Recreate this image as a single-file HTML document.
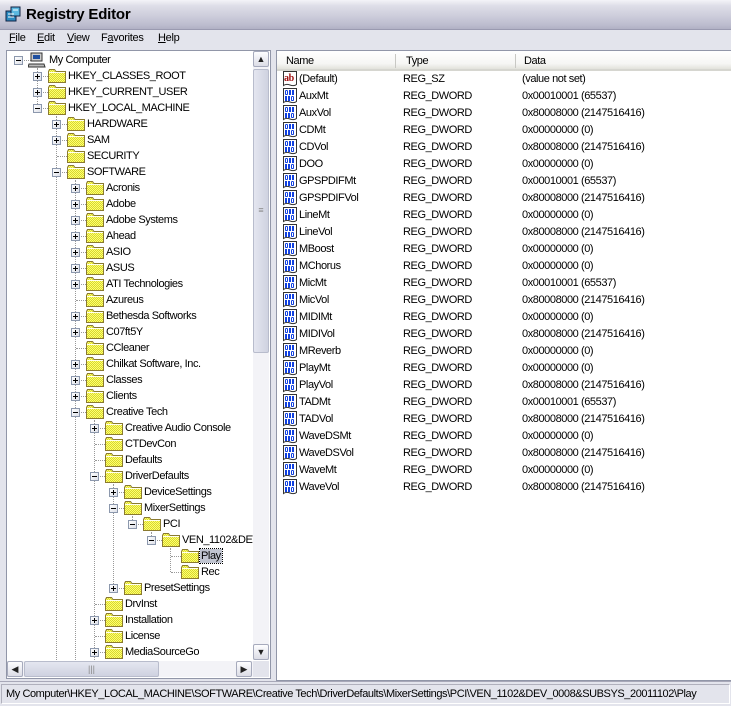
<!DOCTYPE html>
<html><head><meta charset="utf-8"><style>
*{margin:0;padding:0;box-sizing:border-box}
body{width:731px;height:706px;overflow:hidden;background:#e3e4ec;font-family:"Liberation Sans",Tahoma,sans-serif;font-size:11px;letter-spacing:-0.42px;color:#000;position:relative}
.abs{position:absolute}
#title{left:0;top:0;width:731px;height:30px;background:linear-gradient(#f4f4f8 0%,#dedee8 20%,#cdcddb 55%,#bdbdcf 85%,#b0b0c4 100%);border-bottom:1px solid #9a9ab0}
#title span{position:absolute;left:26px;top:6px;font-size:15px;font-weight:bold;color:#000;letter-spacing:-0.2px}
#menu{left:0;top:30px;width:731px;height:18px;background:#e3e4ec}
#menu span{position:absolute;top:2px;font-size:11px;letter-spacing:-0.3px}
#tree{left:6px;top:50px;width:265px;height:629px;background:#fff;border:1px solid #9196a8;overflow:hidden}
.r{position:absolute;height:16px;white-space:nowrap}
.b{position:absolute;left:0;top:4px;width:9px;height:9px;border:1px solid #8c98ad;background:linear-gradient(135deg,#fff,#dde0e8);z-index:2}
.b:before{content:"";position:absolute;left:1px;top:3px;width:5px;height:1px;background:#000}
.b.p:after{content:"";position:absolute;left:3px;top:1px;width:1px;height:5px;background:#000}
.h{position:absolute;left:5px;top:8px;width:12px;border-top:1px dotted #999}
.f{position:absolute;left:15px;top:1px}
.t{position:absolute;left:34px;top:1px;line-height:14px;padding:0 1px;background:#fff}
.sel{background:#c0c4d0;outline:1px dotted #000}
.v{position:absolute;border-left:1px dotted #999;width:0}
#vs{left:253px;top:51px;width:16px;height:609px;background:#f3f3f7}
.btn{position:absolute;width:16px;height:16px;border:1px solid #a6aabc;border-radius:2px;background:linear-gradient(#fdfdff,#dcdde6);font-size:9px;text-align:center;line-height:14px;color:#222;letter-spacing:0}
#hs{left:7px;top:661px;width:246px;height:16px;background:#f3f3f7}
#list{left:276px;top:50px;width:455px;height:631px;background:#fff;border:1px solid #9196a8;border-right:none}
#hdr{position:absolute;left:0;top:0;width:455px;height:20px;background:linear-gradient(#fff,#f6f6f4 70%,#e2e2dc);border-bottom:2px solid #d6d6d0}
#hdr span{position:absolute;top:4px}
.sepc{position:absolute;top:3px;width:1px;height:14px;background:#c8c8c4}
.lr{position:absolute;left:4px;height:17px;width:440px;white-space:nowrap}
.lr svg{position:absolute;left:1px;top:0}
.lr .n{position:absolute;left:18px;top:2px}
.lr .y{position:absolute;left:122px;top:2px}
.lr .d{position:absolute;left:241px;top:2px}
#status{left:0;top:681px;width:731px;height:25px;border-top:1px solid #a8a8b8;background:#e3e4ec}
#status div{position:absolute;left:1px;top:2px;width:729px;height:20px;border:1px solid #b0b0bc;border-bottom-color:#fff;border-right-color:#fff;padding:3px 0 0 4px;white-space:nowrap;overflow:hidden}
</style></head><body>
<svg width="0" height="0" style="position:absolute">
<defs>
<pattern id="ck" width="2" height="2" patternUnits="userSpaceOnUse"><rect width="2" height="2" fill="#ffff70"/><rect width="1" height="1" fill="#d8d830"/><rect x="1" y="1" width="1" height="1" fill="#d8d830"/></pattern>
<symbol id="fold" viewBox="0 0 18 14"><path d="M0.5 2.5 L0.5 13.5 L17.5 13.5 L17.5 2.5 L8 2.5 L6.5 0.5 L1.5 0.5 Z" fill="url(#ck)" stroke="#8a7a30"/><rect x="1" y="3" width="16" height="1" fill="#fffff0"/></symbol>
<symbol id="bin" viewBox="0 0 16 16"><path d="M1.5 0.5 H14.5 V13.5 Q12 15.5 8 14 Q4 12.5 1.5 14.5 Z" fill="#fff" stroke="#333"/><g fill="#1040e0"><rect x="3" y="2" width="3" height="5" rx="1.3"/><rect x="7" y="2" width="2" height="5"/><rect x="10" y="2" width="2" height="5"/><rect x="3" y="8" width="2" height="5"/><rect x="6" y="8" width="2" height="5"/><rect x="9" y="8" width="3" height="5" rx="1.3"/></g><g fill="#fff"><rect x="4" y="3" width="1" height="3"/><rect x="10" y="9" width="1" height="3"/></g></symbol>
<symbol id="ab" viewBox="0 0 16 16"><path d="M1.5 0.5 H14.5 V13.5 Q12 15.5 8 14 Q4 12.5 1.5 14.5 Z" fill="#fff" stroke="#333"/><text x="2" y="10" font-family="Liberation Serif,serif" font-weight="bold" font-size="10" fill="#a01010">ab</text></symbol>
</defs></svg>

<div id="title" class="abs">
<svg class="abs" style="left:5px;top:6px" width="17" height="17" viewBox="0 0 17 17"><rect x="1" y="5" width="10" height="10" fill="#2a8ac0" stroke="#124"/><rect x="6" y="1" width="9" height="9" fill="#5ab8e0" stroke="#124"/><path d="M3 8h6M3 11h6M8 4h5" stroke="#fff"/></svg>
<span>Registry Editor</span></div>
<div id="menu" class="abs">
<span style="left:9px"><u>F</u>ile</span><span style="left:37px"><u>E</u>dit</span><span style="left:67px"><u>V</u>iew</span><span style="left:101px">F<u>a</u>vorites</span><span style="left:158px"><u>H</u>elp</span>
</div>

<div id="tree" class="abs">
<div style="position:absolute;left:-6px;top:-50px;width:300px;height:720px">
<div class="v" style="left:36px;top:67px;height:40px"></div>
<div class="v" style="left:55px;top:115px;height:560px"></div>
<div class="v" style="left:74px;top:179px;height:500px"></div>
<div class="v" style="left:93px;top:419px;height:260px"></div>
<div class="v" style="left:112px;top:483px;height:104px"></div>
<div class="v" style="left:131px;top:515px;height:8px"></div>
<div class="v" style="left:150px;top:531px;height:8px"></div>
<div class="v" style="left:169px;top:547px;height:24px"></div>

<div class="r" style="top:51px;left:13px"><div class="b"></div><div class="h"></div><svg class="f" style="left:14px;top:0" width="18" height="16" viewBox="0 0 18 16"><rect x="3" y="1" width="11" height="8" fill="#ccc" stroke="#333"/><rect x="5" y="3" width="7" height="4" fill="#2050a0"/><path d="M1 12h15l1 3H0z" fill="#bbb" stroke="#333"/></svg><span class="t">My Computer</span></div>
<div class="r" style="top:67px;left:32px"><div class="b p"></div><div class="h"></div><svg class="f" width="18" height="14"><use href="#fold"/></svg><span class="t">HKEY_CLASSES_ROOT</span></div>
<div class="r" style="top:83px;left:32px"><div class="b p"></div><div class="h"></div><svg class="f" width="18" height="14"><use href="#fold"/></svg><span class="t">HKEY_CURRENT_USER</span></div>
<div class="r" style="top:99px;left:32px"><div class="b"></div><div class="h"></div><svg class="f" width="18" height="14"><use href="#fold"/></svg><span class="t">HKEY_LOCAL_MACHINE</span></div>
<div class="r" style="top:115px;left:51px"><div class="b p"></div><div class="h"></div><svg class="f" width="18" height="14"><use href="#fold"/></svg><span class="t">HARDWARE</span></div>
<div class="r" style="top:131px;left:51px"><div class="b p"></div><div class="h"></div><svg class="f" width="18" height="14"><use href="#fold"/></svg><span class="t">SAM</span></div>
<div class="r" style="top:147px;left:51px"><div class="h"></div><svg class="f" width="18" height="14"><use href="#fold"/></svg><span class="t">SECURITY</span></div>
<div class="r" style="top:163px;left:51px"><div class="b"></div><div class="h"></div><svg class="f" width="18" height="14"><use href="#fold"/></svg><span class="t">SOFTWARE</span></div>
<div class="r" style="top:179px;left:70px"><div class="b p"></div><div class="h"></div><svg class="f" width="18" height="14"><use href="#fold"/></svg><span class="t">Acronis</span></div>
<div class="r" style="top:195px;left:70px"><div class="b p"></div><div class="h"></div><svg class="f" width="18" height="14"><use href="#fold"/></svg><span class="t">Adobe</span></div>
<div class="r" style="top:211px;left:70px"><div class="b p"></div><div class="h"></div><svg class="f" width="18" height="14"><use href="#fold"/></svg><span class="t">Adobe Systems</span></div>
<div class="r" style="top:227px;left:70px"><div class="b p"></div><div class="h"></div><svg class="f" width="18" height="14"><use href="#fold"/></svg><span class="t">Ahead</span></div>
<div class="r" style="top:243px;left:70px"><div class="b p"></div><div class="h"></div><svg class="f" width="18" height="14"><use href="#fold"/></svg><span class="t">ASIO</span></div>
<div class="r" style="top:259px;left:70px"><div class="b p"></div><div class="h"></div><svg class="f" width="18" height="14"><use href="#fold"/></svg><span class="t">ASUS</span></div>
<div class="r" style="top:275px;left:70px"><div class="b p"></div><div class="h"></div><svg class="f" width="18" height="14"><use href="#fold"/></svg><span class="t">ATI Technologies</span></div>
<div class="r" style="top:291px;left:70px"><div class="h"></div><svg class="f" width="18" height="14"><use href="#fold"/></svg><span class="t">Azureus</span></div>
<div class="r" style="top:307px;left:70px"><div class="b p"></div><div class="h"></div><svg class="f" width="18" height="14"><use href="#fold"/></svg><span class="t">Bethesda Softworks</span></div>
<div class="r" style="top:323px;left:70px"><div class="b p"></div><div class="h"></div><svg class="f" width="18" height="14"><use href="#fold"/></svg><span class="t">C07ft5Y</span></div>
<div class="r" style="top:339px;left:70px"><div class="h"></div><svg class="f" width="18" height="14"><use href="#fold"/></svg><span class="t">CCleaner</span></div>
<div class="r" style="top:355px;left:70px"><div class="b p"></div><div class="h"></div><svg class="f" width="18" height="14"><use href="#fold"/></svg><span class="t">Chilkat Software, Inc.</span></div>
<div class="r" style="top:371px;left:70px"><div class="b p"></div><div class="h"></div><svg class="f" width="18" height="14"><use href="#fold"/></svg><span class="t">Classes</span></div>
<div class="r" style="top:387px;left:70px"><div class="b p"></div><div class="h"></div><svg class="f" width="18" height="14"><use href="#fold"/></svg><span class="t">Clients</span></div>
<div class="r" style="top:403px;left:70px"><div class="b"></div><div class="h"></div><svg class="f" width="18" height="14"><use href="#fold"/></svg><span class="t">Creative Tech</span></div>
<div class="r" style="top:419px;left:89px"><div class="b p"></div><div class="h"></div><svg class="f" width="18" height="14"><use href="#fold"/></svg><span class="t">Creative Audio Console</span></div>
<div class="r" style="top:435px;left:89px"><div class="h"></div><svg class="f" width="18" height="14"><use href="#fold"/></svg><span class="t">CTDevCon</span></div>
<div class="r" style="top:451px;left:89px"><div class="h"></div><svg class="f" width="18" height="14"><use href="#fold"/></svg><span class="t">Defaults</span></div>
<div class="r" style="top:467px;left:89px"><div class="b"></div><div class="h"></div><svg class="f" width="18" height="14"><use href="#fold"/></svg><span class="t">DriverDefaults</span></div>
<div class="r" style="top:483px;left:108px"><div class="b p"></div><div class="h"></div><svg class="f" width="18" height="14"><use href="#fold"/></svg><span class="t">DeviceSettings</span></div>
<div class="r" style="top:499px;left:108px"><div class="b"></div><div class="h"></div><svg class="f" width="18" height="14"><use href="#fold"/></svg><span class="t">MixerSettings</span></div>
<div class="r" style="top:515px;left:127px"><div class="b"></div><div class="h"></div><svg class="f" width="18" height="14"><use href="#fold"/></svg><span class="t">PCI</span></div>
<div class="r" style="top:531px;left:146px"><div class="b"></div><div class="h"></div><svg class="f" width="18" height="14"><use href="#fold"/></svg><span class="t">VEN_1102&amp;DEV_0008</span></div>
<div class="r" style="top:547px;left:165px"><div class="h"></div><svg class="f" width="18" height="14"><use href="#fold"/></svg><span class="t sel">Play</span></div>
<div class="r" style="top:563px;left:165px"><div class="h"></div><svg class="f" width="18" height="14"><use href="#fold"/></svg><span class="t">Rec</span></div>
<div class="r" style="top:579px;left:108px"><div class="b p"></div><div class="h"></div><svg class="f" width="18" height="14"><use href="#fold"/></svg><span class="t">PresetSettings</span></div>
<div class="r" style="top:595px;left:89px"><div class="h"></div><svg class="f" width="18" height="14"><use href="#fold"/></svg><span class="t">DrvInst</span></div>
<div class="r" style="top:611px;left:89px"><div class="b p"></div><div class="h"></div><svg class="f" width="18" height="14"><use href="#fold"/></svg><span class="t">Installation</span></div>
<div class="r" style="top:627px;left:89px"><div class="h"></div><svg class="f" width="18" height="14"><use href="#fold"/></svg><span class="t">License</span></div>
<div class="r" style="top:643px;left:89px"><div class="b p"></div><div class="h"></div><svg class="f" width="18" height="14"><use href="#fold"/></svg><span class="t">MediaSourceGo</span></div>
</div>
</div>
<div class="abs" style="left:269px;top:51px;width:1px;height:627px;background:#fff"></div>

<div id="vs" class="abs">
<div class="btn" style="left:0;top:0">&#9650;</div>
<div class="btn" style="left:0;top:18px;height:284px;background:linear-gradient(90deg,#e4e6f0,#cfd2e0);border-color:#b8bccc;line-height:280px;color:#888">&#8801;</div>
<div class="btn" style="left:0;top:593px">&#9660;</div>
</div>
<div id="hs" class="abs">
<div class="btn" style="left:0;top:0">&#9664;</div>
<div class="btn" style="left:17px;top:0;width:135px;background:linear-gradient(#e4e6f0,#cfd2e0);border-color:#b8bccc;color:#888">|||</div>
<div class="btn" style="left:229px;top:0">&#9654;</div>
</div>
<div class="abs" style="left:253px;top:661px;width:16px;height:16px;background:#e3e4ec"></div>
<div class="abs" style="left:7px;top:677px;width:263px;height:1px;background:#fff"></div>

<div id="list" class="abs">
<div id="hdr"><span style="left:9px">Name</span><div class="sepc" style="left:118px"></div><span style="left:129px">Type</span><div class="sepc" style="left:238px"></div><span style="left:247px">Data</span></div>
<div class="lr" style="top:20px"><svg width="16" height="16"><use href="#ab"/></svg><span class="n">(Default)</span><span class="y">REG_SZ</span><span class="d">(value not set)</span></div>
<div class="lr" style="top:37px"><svg width="16" height="16"><use href="#bin"/></svg><span class="n">AuxMt</span><span class="y">REG_DWORD</span><span class="d">0x00010001 (65537)</span></div>
<div class="lr" style="top:54px"><svg width="16" height="16"><use href="#bin"/></svg><span class="n">AuxVol</span><span class="y">REG_DWORD</span><span class="d">0x80008000 (2147516416)</span></div>
<div class="lr" style="top:71px"><svg width="16" height="16"><use href="#bin"/></svg><span class="n">CDMt</span><span class="y">REG_DWORD</span><span class="d">0x00000000 (0)</span></div>
<div class="lr" style="top:88px"><svg width="16" height="16"><use href="#bin"/></svg><span class="n">CDVol</span><span class="y">REG_DWORD</span><span class="d">0x80008000 (2147516416)</span></div>
<div class="lr" style="top:105px"><svg width="16" height="16"><use href="#bin"/></svg><span class="n">DOO</span><span class="y">REG_DWORD</span><span class="d">0x00000000 (0)</span></div>
<div class="lr" style="top:122px"><svg width="16" height="16"><use href="#bin"/></svg><span class="n">GPSPDIFMt</span><span class="y">REG_DWORD</span><span class="d">0x00010001 (65537)</span></div>
<div class="lr" style="top:139px"><svg width="16" height="16"><use href="#bin"/></svg><span class="n">GPSPDIFVol</span><span class="y">REG_DWORD</span><span class="d">0x80008000 (2147516416)</span></div>
<div class="lr" style="top:156px"><svg width="16" height="16"><use href="#bin"/></svg><span class="n">LineMt</span><span class="y">REG_DWORD</span><span class="d">0x00000000 (0)</span></div>
<div class="lr" style="top:173px"><svg width="16" height="16"><use href="#bin"/></svg><span class="n">LineVol</span><span class="y">REG_DWORD</span><span class="d">0x80008000 (2147516416)</span></div>
<div class="lr" style="top:190px"><svg width="16" height="16"><use href="#bin"/></svg><span class="n">MBoost</span><span class="y">REG_DWORD</span><span class="d">0x00000000 (0)</span></div>
<div class="lr" style="top:207px"><svg width="16" height="16"><use href="#bin"/></svg><span class="n">MChorus</span><span class="y">REG_DWORD</span><span class="d">0x00000000 (0)</span></div>
<div class="lr" style="top:224px"><svg width="16" height="16"><use href="#bin"/></svg><span class="n">MicMt</span><span class="y">REG_DWORD</span><span class="d">0x00010001 (65537)</span></div>
<div class="lr" style="top:241px"><svg width="16" height="16"><use href="#bin"/></svg><span class="n">MicVol</span><span class="y">REG_DWORD</span><span class="d">0x80008000 (2147516416)</span></div>
<div class="lr" style="top:258px"><svg width="16" height="16"><use href="#bin"/></svg><span class="n">MIDIMt</span><span class="y">REG_DWORD</span><span class="d">0x00000000 (0)</span></div>
<div class="lr" style="top:275px"><svg width="16" height="16"><use href="#bin"/></svg><span class="n">MIDIVol</span><span class="y">REG_DWORD</span><span class="d">0x80008000 (2147516416)</span></div>
<div class="lr" style="top:292px"><svg width="16" height="16"><use href="#bin"/></svg><span class="n">MReverb</span><span class="y">REG_DWORD</span><span class="d">0x00000000 (0)</span></div>
<div class="lr" style="top:309px"><svg width="16" height="16"><use href="#bin"/></svg><span class="n">PlayMt</span><span class="y">REG_DWORD</span><span class="d">0x00000000 (0)</span></div>
<div class="lr" style="top:326px"><svg width="16" height="16"><use href="#bin"/></svg><span class="n">PlayVol</span><span class="y">REG_DWORD</span><span class="d">0x80008000 (2147516416)</span></div>
<div class="lr" style="top:343px"><svg width="16" height="16"><use href="#bin"/></svg><span class="n">TADMt</span><span class="y">REG_DWORD</span><span class="d">0x00010001 (65537)</span></div>
<div class="lr" style="top:360px"><svg width="16" height="16"><use href="#bin"/></svg><span class="n">TADVol</span><span class="y">REG_DWORD</span><span class="d">0x80008000 (2147516416)</span></div>
<div class="lr" style="top:377px"><svg width="16" height="16"><use href="#bin"/></svg><span class="n">WaveDSMt</span><span class="y">REG_DWORD</span><span class="d">0x00000000 (0)</span></div>
<div class="lr" style="top:394px"><svg width="16" height="16"><use href="#bin"/></svg><span class="n">WaveDSVol</span><span class="y">REG_DWORD</span><span class="d">0x80008000 (2147516416)</span></div>
<div class="lr" style="top:411px"><svg width="16" height="16"><use href="#bin"/></svg><span class="n">WaveMt</span><span class="y">REG_DWORD</span><span class="d">0x00000000 (0)</span></div>
<div class="lr" style="top:428px"><svg width="16" height="16"><use href="#bin"/></svg><span class="n">WaveVol</span><span class="y">REG_DWORD</span><span class="d">0x80008000 (2147516416)</span></div>
</div>

<div id="status" class="abs"><div>My Computer\HKEY_LOCAL_MACHINE\SOFTWARE\Creative Tech\DriverDefaults\MixerSettings\PCI\VEN_1102&amp;DEV_0008&amp;SUBSYS_20011102\Play</div></div>
</body></html>
